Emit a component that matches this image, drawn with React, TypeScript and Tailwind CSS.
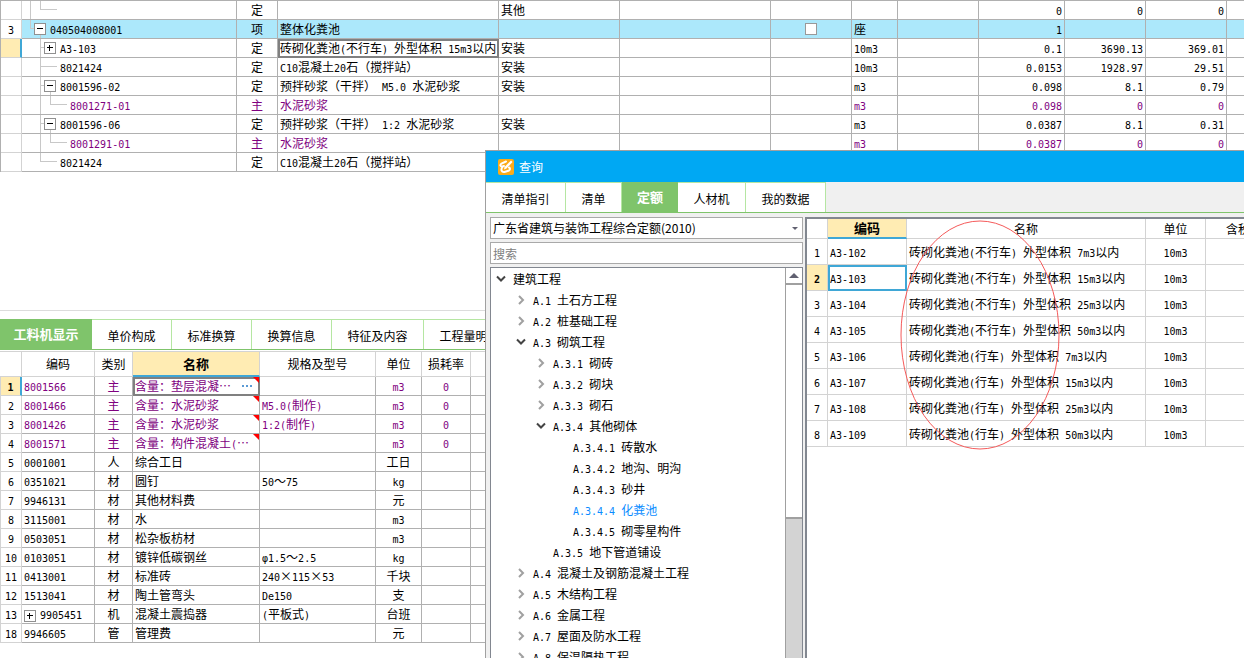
import { Fragment, type ReactNode } from "react";

// Latin runs are half the width of a Chinese character.
function T({ children }: { children: string }) {
  const parts = children.split(/([\x20-\x7eφ]+)/);
  return (
    <>
      {parts.map((part, i) =>
        i % 2 === 1 ? (
          <span
            key={i}
            className="font-['DejaVu_Sans_Mono',monospace] text-[10px] leading-none whitespace-pre"
          >
            {part}
          </span>
        ) : (
          <Fragment key={i}>{part}</Fragment>
        ),
      )}
    </>
  );
}

type BudgetRow = {
  no?: string;
  code: string;
  kind: string;
  name: string;
  major?: string;
  unit?: string;
  qty?: string;
  price?: string;
  total?: string;
  lines: string;
  box?: { x: number; open: boolean };
  indent: string;
  state?: "project" | "current" | "material";
};

const budgetRows: BudgetRow[] = [
  { code: "", kind: "定", name: "", major: "其他", qty: "0", price: "0", total: "0", lines: "M8.5 0V18M18.5 0V9M18 8.5H35", indent: "pl-[28px]" },
  { no: "3", code: "040504008001", kind: "项", name: "整体化粪池", unit: "座", qty: "1", lines: "M8.5 0V9M8 8.5H12M18.5 15V18", box: { x: 12, open: true }, indent: "pl-[28px]", state: "project" },
  { code: "A3-103", kind: "定", name: "砖砌化粪池(不行车) 外型体积 15m3以内", major: "安装", unit: "10m3", qty: "0.1", price: "3690.13", total: "369.01", lines: "M18.5 0V18M18 8.5H22", box: { x: 22, open: false }, indent: "pl-[38px]", state: "current" },
  { code: "8021424", kind: "定", name: "C10混凝土20石（搅拌站）", major: "安装", unit: "10m3", qty: "0.0153", price: "1928.97", total: "29.51", lines: "M18.5 0V18M18 8.5H35", indent: "pl-[38px]" },
  { code: "8001596-02", kind: "定", name: "预拌砂浆（干拌） M5.0 水泥砂浆", major: "安装", unit: "m3", qty: "0.098", price: "8.1", total: "0.79", lines: "M18.5 0V18M18 8.5H22M28.5 15V18", box: { x: 22, open: true }, indent: "pl-[38px]" },
  { code: "8001271-01", kind: "主", name: "水泥砂浆", unit: "m3", qty: "0.098", price: "0", total: "0", lines: "M18.5 0V18M28.5 0V9M28 8.5H45", indent: "pl-[48px]", state: "material" },
  { code: "8001596-06", kind: "定", name: "预拌砂浆（干拌） 1:2 水泥砂浆", major: "安装", unit: "m3", qty: "0.0387", price: "8.1", total: "0.31", lines: "M18.5 0V18M18 8.5H22M28.5 15V18", box: { x: 22, open: true }, indent: "pl-[38px]" },
  { code: "8001291-01", kind: "主", name: "水泥砂浆", unit: "m3", qty: "0.0387", price: "0", total: "0", lines: "M18.5 0V18M28.5 0V9M28 8.5H45", indent: "pl-[48px]", state: "material" },
  { code: "8021424", kind: "定", name: "C10混凝土20石（搅拌站）", lines: "M18.5 0V9M18 8.5H35", indent: "pl-[38px]" },
];

const resourceTabs = [
  { label: "单价构成", width: "w-20" },
  { label: "标准换算", width: "w-20" },
  { label: "换算信息", width: "w-20" },
  { label: "特征及内容", width: "w-[92px]" },
  { label: "工程量明细", width: "w-[92px]" },
];

type ResourceRow = [no: string, code: string, kind: string, name: string, spec: string, unit: string, loss: string];

const resourceRows: ResourceRow[] = [
  ["1", "8001566", "主", "含量：垫层混凝…", "", "m3", "0"],
  ["2", "8001466", "主", "含量：水泥砂浆", "M5.0(制作)", "m3", "0"],
  ["3", "8001426", "主", "含量：水泥砂浆", "1:2(制作)", "m3", "0"],
  ["4", "8001571", "主", "含量：构件混凝土(…", "", "m3", "0"],
  ["5", "0001001", "人", "综合工日", "", "工日", ""],
  ["6", "0351021", "材", "圆钉", "50～75", "kg", ""],
  ["7", "9946131", "材", "其他材料费", "", "元", ""],
  ["8", "3115001", "材", "水", "", "m3", ""],
  ["9", "0503051", "材", "松杂板枋材", "", "m3", ""],
  ["10", "0103051", "材", "镀锌低碳钢丝", "φ1.5～2.5", "kg", ""],
  ["11", "0413001", "材", "标准砖", "240×115×53", "千块", ""],
  ["12", "1513041", "材", "陶土管弯头", "De150", "支", ""],
  ["13", "9905451", "机", "混凝土震捣器", "(平板式)", "台班", ""],
  ["18", "9946605", "管", "管理费", "", "元", ""],
];

type TreeNode = { label: string; level: 0 | 1 | 2 | 3; state: "open" | "closed" | "leaf"; selected?: boolean };

const treeNodes: TreeNode[] = [
  { label: "建筑工程", level: 0, state: "open" },
  { label: "A.1 土石方工程", level: 1, state: "closed" },
  { label: "A.2 桩基础工程", level: 1, state: "closed" },
  { label: "A.3 砌筑工程", level: 1, state: "open" },
  { label: "A.3.1 砌砖", level: 2, state: "closed" },
  { label: "A.3.2 砌块", level: 2, state: "closed" },
  { label: "A.3.3 砌石", level: 2, state: "closed" },
  { label: "A.3.4 其他砌体", level: 2, state: "open" },
  { label: "A.3.4.1 砖散水", level: 3, state: "leaf" },
  { label: "A.3.4.2 地沟、明沟", level: 3, state: "leaf" },
  { label: "A.3.4.3 砂井", level: 3, state: "leaf" },
  { label: "A.3.4.4 化粪池", level: 3, state: "leaf", selected: true },
  { label: "A.3.4.5 砌零星构件", level: 3, state: "leaf" },
  { label: "A.3.5 地下管道铺设", level: 2, state: "leaf" },
  { label: "A.4 混凝土及钢筋混凝土工程", level: 1, state: "closed" },
  { label: "A.5 木结构工程", level: 1, state: "closed" },
  { label: "A.6 金属工程", level: 1, state: "closed" },
  { label: "A.7 屋面及防水工程", level: 1, state: "closed" },
  { label: "A.8 保温隔热工程", level: 1, state: "closed" },
];

const treeIndent = ["pl-1", "pl-6", "pl-11", "pl-16"];

const quotaRows = [
  ["A3-102", "砖砌化粪池(不行车) 外型体积 7m3以内"],
  ["A3-103", "砖砌化粪池(不行车) 外型体积 15m3以内"],
  ["A3-104", "砖砌化粪池(不行车) 外型体积 25m3以内"],
  ["A3-105", "砖砌化粪池(不行车) 外型体积 50m3以内"],
  ["A3-106", "砖砌化粪池(行车) 外型体积 7m3以内"],
  ["A3-107", "砖砌化粪池(行车) 外型体积 15m3以内"],
  ["A3-108", "砖砌化粪池(行车) 外型体积 25m3以内"],
  ["A3-109", "砖砌化粪池(行车) 外型体积 50m3以内"],
];

function ExpandBox({ x = 0, y = 0, open }: { x?: number; y?: number; open: boolean }) {
  return (
    <g transform={`translate(${x} ${y})`}>
      <rect x="0.5" y="0.5" width="11" height="11" fill="#fff" stroke="#909090" />
      <path d={open ? "M3 5.5H9" : "M3 5.5H9M5.5 3V9"} stroke="#000" fill="none" />
    </g>
  );
}

function BudgetCell({ children, className = "" }: { children?: ReactNode; className?: string }) {
  return (
    <td className={`h-[19px] overflow-hidden border-r border-b border-[#b0b0b0] px-0.5 whitespace-nowrap ${className}`}>
      {children}
    </td>
  );
}

function BudgetTable() {
  return (
    <table
      aria-label="分部分项"
      className="w-full table-fixed border-separate border-spacing-0 border-t border-l border-[#b0b0b0] leading-[18px]"
    >
      <colgroup>
        <col className="w-[21px]" />
        <col className="w-[215px]" />
        <col className="w-[41px]" />
        <col className="w-[221px]" />
        <col className="w-[121px]" />
        <col className="w-[151px]" />
        <col className="w-[81px]" />
        <col className="w-[46px]" />
        <col className="w-[81px]" />
        <col className="w-[86px]" />
        <col className="w-[81px]" />
        <col className="w-[81px]" />
        <col />
      </colgroup>
      <tbody>
        {budgetRows.map((row, i) => {
          const project = row.state === "project";
          const current = row.state === "current";
          return (
            <tr
              key={i}
              className={`${project ? "bg-[#ace8fb]" : "bg-white"} ${row.state === "material" ? "text-[#800080]" : "text-black"}`}
            >
              <td
                className={`h-[19px] border-b border-[#d3d3d3] text-center ${current ? "border-r-2 border-r-[#3fa7d6] bg-[#ffecb3]" : "border-r bg-white"}`}
              >
                <T>{row.no ?? ""}</T>
              </td>
              <td className="relative h-[19px] border-r border-b border-[#b0b0b0] p-0">
                <svg className="absolute top-0 left-0" width="60" height="18" aria-hidden="true">
                  <path d={row.lines} stroke="#c8c8c8" fill="none" />
                  {row.box && <ExpandBox x={row.box.x} y={3} open={row.box.open} />}
                </svg>
                <div className={row.indent}>
                  <T>{row.code}</T>
                </div>
              </td>
              <BudgetCell className="text-center">{row.kind}</BudgetCell>
              <BudgetCell className={current ? "outline-2 -outline-offset-2 outline-[#808080]" : ""}>
                <T>{row.name}</T>
              </BudgetCell>
              <BudgetCell>{row.major}</BudgetCell>
              <BudgetCell />
              <BudgetCell>
                {project && (
                  <input
                    type="checkbox"
                    aria-label="锁定综合单价"
                    className="mx-auto block size-3 appearance-none border border-[#999] bg-white"
                  />
                )}
              </BudgetCell>
              <BudgetCell>
                <T>{row.unit ?? ""}</T>
              </BudgetCell>
              <BudgetCell />
              <BudgetCell className="text-right">
                <T>{row.qty ?? ""}</T>
              </BudgetCell>
              <BudgetCell className="text-right">
                <T>{row.price ?? ""}</T>
              </BudgetCell>
              <BudgetCell className="text-right">
                <T>{row.total ?? ""}</T>
              </BudgetCell>
              <td className="border-b border-[#b0b0b0]" />
            </tr>
          );
        })}
      </tbody>
    </table>
  );
}

function ResourceTable() {
  const head = "h-[25px] border-r border-b border-[#d3d3d3] p-0 font-normal";
  const cell = "h-[19px] overflow-hidden border-r border-b border-[#b0b0b0] px-0.5 whitespace-nowrap";
  return (
    <table
      aria-label="工料机显示"
      className="mt-px w-full table-fixed border-separate border-spacing-0 border-t border-[#d3d3d3] leading-[18px]"
    >
      <colgroup>
        <col className="w-[22px]" />
        <col className="w-[73px]" />
        <col className="w-[38px]" />
        <col className="w-[127px]" />
        <col className="w-[116px]" />
        <col className="w-[46px]" />
        <col className="w-[49px]" />
        <col />
      </colgroup>
      <thead>
        <tr>
          <th className={head} />
          <th className={head}>编码</th>
          <th className={head}>类别</th>
          <th className="border-r border-b-2 border-r-[#d3d3d3] border-b-[#3fa7d6] bg-[#ffecb3] p-0 text-[13px] font-bold">
            名称
          </th>
          <th className={head}>规格及型号</th>
          <th className={head}>单位</th>
          <th className={head}>损耗率</th>
          <th className={head} />
        </tr>
      </thead>
      <tbody>
        {resourceRows.map(([no, code, kind, name, spec, unit, loss], i) => {
          const main = kind === "主";
          const current = i === 0;
          return (
            <tr key={no} className={main ? "text-[#800080]" : "text-black"}>
              <td
                className={`h-[19px] border-b border-l border-[#d3d3d3] p-0 text-center text-black ${current ? "border-r-2 border-r-[#3fa7d6] bg-[#ffecb3] font-bold" : "border-r"}`}
              >
                <T>{no}</T>
              </td>
              <td className={cell}>
                {no === "13" && (
                  <svg className="mr-1 inline-block align-middle" width="12" height="12" aria-hidden="true">
                    <ExpandBox open={false} />
                  </svg>
                )}
                <T>{code}</T>
              </td>
              <td className={`${cell} text-center`}>{kind}</td>
              <td className={`${cell} relative ${current ? "outline-2 -outline-offset-2 outline-[#808080]" : ""}`}>
                <span className="flex items-center justify-between">
                  <span>
                    <T>{name}</T>
                  </span>
                  {current && (
                    <button type="button" aria-label="更多" className="mr-1">
                      <svg width="11" height="2" aria-hidden="true">
                        <path d="M0 1H2M4 1H6M8 1H10" stroke="#5b9bd5" strokeWidth="2" />
                      </svg>
                    </button>
                  )}
                </span>
                {main && (
                  <svg className="absolute top-0 right-0" width="6" height="6" aria-hidden="true">
                    <path d="M0 0H6V6Z" fill="#f00" />
                  </svg>
                )}
              </td>
              <td className={cell}>
                <T>{spec}</T>
              </td>
              <td className={`${cell} text-center`}>
                <T>{unit}</T>
              </td>
              <td className={`${cell} text-center`}>
                <T>{loss}</T>
              </td>
              <td className={cell} />
            </tr>
          );
        })}
      </tbody>
    </table>
  );
}

function ResourcePanel() {
  return (
    <section className="h-[348px] flex-none overflow-hidden border-t border-[#dcdcdc] pt-2">
      <nav className="flex h-[31px] border-b border-[#7fc46b]">
        <button type="button" className="w-[92px] bg-[#7fc46b] text-[13px] font-bold text-white">
          工料机显示
        </button>
        {resourceTabs.map((tab) => (
          <button
            key={tab.label}
            type="button"
            className={`${tab.width} flex-none border-t border-r border-[#b5e6a2] bg-white pt-0.5 whitespace-nowrap`}
          >
            {tab.label}
          </button>
        ))}
      </nav>
      <ResourceTable />
    </section>
  );
}

function TreeArrow({ open }: { open: boolean }) {
  return (
    <svg width="12" height="12" fill="none" strokeWidth="2" aria-hidden="true">
      {open ? (
        <path d="M2 3.5L6 7.5L10 3.5" stroke="#444" />
      ) : (
        <path d="M4 2L8 6L4 10" stroke="#a0a0a0" />
      )}
    </svg>
  );
}

function QuotaTree() {
  return (
    <div className="flex min-h-0 flex-1 overflow-hidden border border-b-0 border-[#828790] bg-white">
      <ul className="min-w-0 flex-1">
        {treeNodes.map((node) => (
          <li
            key={node.label}
            className={`${treeIndent[node.level]} flex h-[21px] items-center gap-1.5 whitespace-nowrap ${node.selected ? "text-[#0a8cff]" : "text-black"}`}
          >
            <span className="w-3 flex-none">
              {node.state !== "leaf" && <TreeArrow open={node.state === "open"} />}
            </span>
            <span>
              <T>{node.label}</T>
            </span>
          </li>
        ))}
      </ul>
      <div className="flex w-[17px] flex-col border-l border-[#a0a0a0] bg-[#d3d3d3]">
        <button
          type="button"
          aria-label="向上滚动"
          className="flex h-[17px] items-center justify-center border-b-2 border-[#a0a0a0] bg-white"
        >
          <svg width="10" height="5" aria-hidden="true">
            <path d="M0 5L5 0L10 5Z" fill="#606070" />
          </svg>
        </button>
        <div className="h-[234px] border-b-2 border-[#a0a0a0] bg-white" />
      </div>
    </div>
  );
}

function QuotaTable() {
  const head = "h-5 border-r border-b border-[#d3d3d3] p-0 font-normal whitespace-nowrap";
  const cell = "h-[26px] border-r border-b border-[#d3d3d3] px-0.5 whitespace-nowrap";
  return (
    <div className="relative min-w-0 flex-1 overflow-hidden border-t-2 border-l-2 border-[#828790] bg-white">
      <table aria-label="定额" className="w-full table-fixed border-separate border-spacing-0 leading-[18px]">
        <colgroup>
          <col className="w-[21px]" />
          <col className="w-[79px]" />
          <col className="w-[239px]" />
          <col className="w-[60px]" />
          <col />
        </colgroup>
        <thead>
          <tr>
            <th className={head} />
            <th className="border-r border-b-2 border-r-[#d3d3d3] border-b-[#3fa7d6] bg-[#ffecb3] p-0 text-[13px] font-bold">
              编码
            </th>
            <th className={head}>名称</th>
            <th className={head}>单位</th>
            <th className="overflow-hidden border-b border-[#d3d3d3] p-0 pl-5 text-left font-normal whitespace-nowrap">
              含税
            </th>
          </tr>
        </thead>
        <tbody>
          {quotaRows.map(([code, name], i) => {
            const current = i === 1;
            return (
              <tr key={code}>
                <td
                  className={`h-[26px] border-r border-b border-[#d3d3d3] p-0 text-center ${current ? "bg-[#ffecb3] font-bold" : ""}`}
                >
                  <T>{String(i + 1)}</T>
                </td>
                <td className={`${cell} ${current ? "outline-2 -outline-offset-2 outline-[#3fa7d6]" : ""}`}>
                  <T>{code}</T>
                </td>
                <td className={cell}>
                  <T>{name}</T>
                </td>
                <td className={`${cell} text-center`}>
                  <T>10m3</T>
                </td>
                <td className="border-b border-[#d3d3d3]" />
              </tr>
            );
          })}
        </tbody>
      </table>
      <svg className="absolute top-px left-[93px]" width="160" height="230" fill="none" aria-hidden="true">
        <ellipse cx="80" cy="115" rx="79" ry="114" stroke="#f55a5a" />
      </svg>
    </div>
  );
}

function QueryDialog() {
  const tab = "flex-none border-t border-r border-[#b5e6a2] bg-white pt-0.5";
  return (
    <div
      role="dialog"
      aria-label="查询"
      className="absolute top-[150px] right-0 bottom-0 left-[485px] flex flex-col border-t border-l border-[#a0a0a0] bg-[#f0f0f0]"
    >
      <header className="flex h-[31px] flex-none items-center gap-[5px] bg-[#00a8f3] pl-3 text-white">
        <svg width="16" height="16" aria-hidden="true">
          <rect width="16" height="16" rx="2" fill="#fbab18" />
          <path
            d="M8 2.5L3.5 4.5C1.5 6 2.5 8 4.5 7.5L6 7M4.5 8C2.5 10.5 3.5 13.5 6.5 13L11 11.5C12.5 10.5 12 9 11 8.5"
            fill="none"
            stroke="#fff"
            strokeWidth="2"
            strokeLinecap="round"
          />
          <path d="M13 1.5L14.5 3L8.5 9.5L6 10.5L6.5 8Z" fill="#fff" />
        </svg>
        <h1>查询</h1>
      </header>
      <nav className="flex h-[31px] flex-none border-b border-[#7fc46b]">
        <button type="button" className={`${tab} w-20`}>
          清单指引
        </button>
        <button type="button" className={`${tab} w-14`}>
          清单
        </button>
        <button type="button" className="w-14 flex-none bg-[#7fc46b] text-[13px] font-bold text-white">
          定额
        </button>
        <button type="button" className={`${tab} w-[68px]`}>
          人材机
        </button>
        <button type="button" className={`${tab} w-20`}>
          我的数据
        </button>
      </nav>
      <div className="flex min-h-0 flex-1 gap-0.5 pt-1 pl-1">
        <div className="flex w-[313px] flex-none flex-col gap-[3px]">
          <div className="relative">
            <select
              aria-label="定额库"
              className="block h-[22px] w-full appearance-none border border-[#a9a9a9] bg-white px-0.5"
            >
              <option>广东省建筑与装饰工程综合定额(2010)</option>
            </select>
            <svg className="pointer-events-none absolute top-[10px] right-[5px]" width="6" height="3" aria-hidden="true">
              <path d="M0 0H6L3 3Z" fill="#606070" />
            </svg>
          </div>
          <input
            type="text"
            aria-label="搜索"
            placeholder="搜索"
            className="h-[22px] w-full border border-[#a9a9a9] bg-white px-0.5 placeholder:text-[#808080]"
          />
          <QuotaTree />
        </div>
        <QuotaTable />
      </div>
    </div>
  );
}

export default function App() {
  return (
    <main className="relative flex h-screen flex-col overflow-hidden bg-white font-['Noto_Sans_CJK_SC',sans-serif] text-xs text-black">
      <section className="min-h-0 flex-1 overflow-hidden">
        <BudgetTable />
      </section>
      <ResourcePanel />
      <QueryDialog />
    </main>
  );
}
